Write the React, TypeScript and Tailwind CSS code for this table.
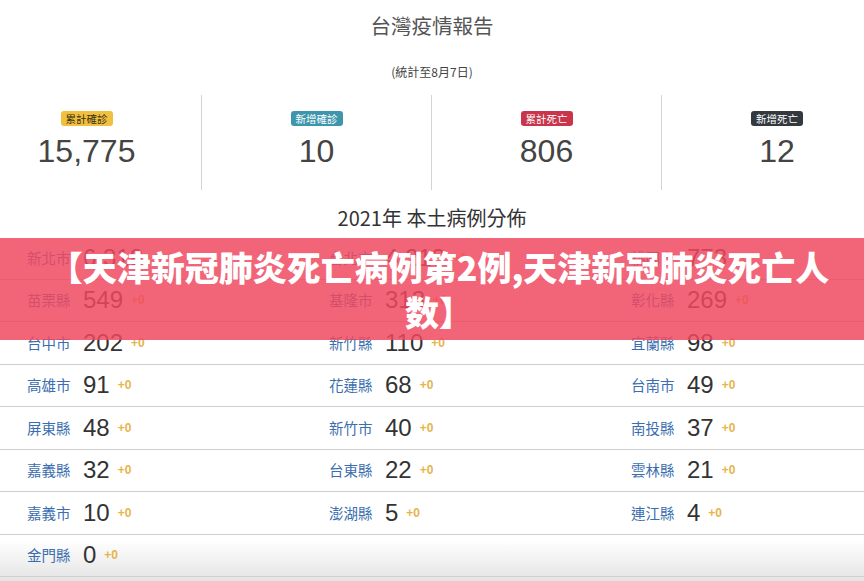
import React from 'react';

interface Stat {
  label: string;
  value: string;
  badgeClass: string;
}

interface Region {
  name: string;
  count: string;
  delta: string;
}

const stats: Stat[] = [
  { label: '累計確診', value: '15,775', badgeClass: 'bg-[#f1c03f] text-[#3a2e10]' },
  { label: '新增確診', value: '10', badgeClass: 'bg-[#3e96ad] text-white' },
  { label: '累計死亡', value: '806', badgeClass: 'bg-[#c9364b] text-white' },
  { label: '新增死亡', value: '12', badgeClass: 'bg-[#33393f] text-white' },
];

// rows of three cells, left to right
const rows: (Region | null)[][] = [
  [
    { name: '新北市', count: '6,318', delta: '+1' },
    { name: '台北市', count: '4,213', delta: '+1' },
    { name: '桃園市', count: '773', delta: '+0' },
  ],
  [
    { name: '苗栗縣', count: '549', delta: '+0' },
    { name: '基隆市', count: '313', delta: '+0' },
    { name: '彰化縣', count: '269', delta: '+0' },
  ],
  [
    { name: '台中市', count: '202', delta: '+0' },
    { name: '新竹縣', count: '110', delta: '+0' },
    { name: '宜蘭縣', count: '98', delta: '+0' },
  ],
  [
    { name: '高雄市', count: '91', delta: '+0' },
    { name: '花蓮縣', count: '68', delta: '+0' },
    { name: '台南市', count: '49', delta: '+0' },
  ],
  [
    { name: '屏東縣', count: '48', delta: '+0' },
    { name: '新竹市', count: '40', delta: '+0' },
    { name: '南投縣', count: '37', delta: '+0' },
  ],
  [
    { name: '嘉義縣', count: '32', delta: '+0' },
    { name: '台東縣', count: '22', delta: '+0' },
    { name: '雲林縣', count: '21', delta: '+0' },
  ],
  [
    { name: '嘉義市', count: '10', delta: '+0' },
    { name: '澎湖縣', count: '5', delta: '+0' },
    { name: '連江縣', count: '4', delta: '+0' },
  ],
  [{ name: '金門縣', count: '0', delta: '+0' }, null, null],
];

const sans = "font-['Liberation_Sans','Noto_Sans_CJK_TC',sans-serif]";

const RegionCell: React.FC<{ region: Region | null }> = ({ region }) => {
  if (!region) return <div className="w-[302px]" />;
  return (
    <div className="w-[302px] flex items-center pl-[27px]">
      <span className="text-[14.5px] text-[#3b6eae] font-['Noto_Sans_CJK_TC',sans-serif] w-[56px] leading-none">
        {region.name}
      </span>
      <span className="text-[24px] text-[#333] leading-none">{region.count}</span>
      <span className="ml-[8px] text-[12px] font-bold text-[#e6b44c] leading-none">{region.delta}</span>
    </div>
  );
};

export default function App() {
  return (
    <div
      className={`relative w-[864px] h-[581px] overflow-hidden bg-[linear-gradient(to_bottom,#ffffff_0px,#ffffff_540px,#e4e4e4_581px)] ${sans}`}
    >
      {/* report header */}
      <div className="flex flex-col items-center pt-[11px]">
        <h1 className="text-[20.5px] leading-[28px] text-[#555] font-['Noto_Sans_CJK_TC',sans-serif]">
          台灣疫情報告
        </h1>
        <div className="h-[25px]" />
        <p className="text-[12px] leading-[16px] text-[#444] font-['Noto_Sans_CJK_TC',sans-serif]">
          (統計至8月7日)
        </p>
      </div>

      {/* summary stats */}
      <div className="flex -ml-[28px] w-[920px] mt-[15px]">
        {stats.map((s, i) => (
          <div
            key={s.label}
            className={`w-[230px] h-[95px] flex flex-col items-center pt-[16px] ${
              i < 3 ? 'border-r border-[#d4d4d4]' : ''
            }`}
          >
            <span
              className={`px-[5px] h-[15px] rounded-[3px] text-[10.5px] leading-[15px] font-['Noto_Sans_CJK_TC',sans-serif] ${s.badgeClass}`}
            >
              {s.label}
            </span>
            <span className="mt-[7px] text-[32px] leading-[36px] text-[#444]">{s.value}</span>
          </div>
        ))}
      </div>

      {/* local case distribution */}
      <h2 className="mt-[14px] text-center text-[20px] leading-[28px] text-[#333] font-['Noto_Sans_CJK_TC',sans-serif]">
        2021年 本土病例分佈
      </h2>

      <div className="mt-[5px] w-[906px]">
        {rows.map((row, r) => (
          <div key={r} className="flex h-[42.5px] border-b border-[#cfcfcf]">
            {row.map((cell, c) => (
              <RegionCell key={c} region={cell} />
            ))}
          </div>
        ))}
      </div>

      {/* headline banner laid over the page */}
      <div className="absolute left-0 right-0 top-[238px] h-[102px] bg-[rgba(240,72,94,0.84)] flex items-center justify-center pl-[44px] pr-[30px]">
        <p className="text-center text-white text-[34px] leading-[45px] font-black font-['Noto_Sans_CJK_SC',sans-serif]">
          【天津新冠肺炎死亡病例第2例,天津新冠肺炎死亡人数】
        </p>
      </div>
    </div>
  );
}
